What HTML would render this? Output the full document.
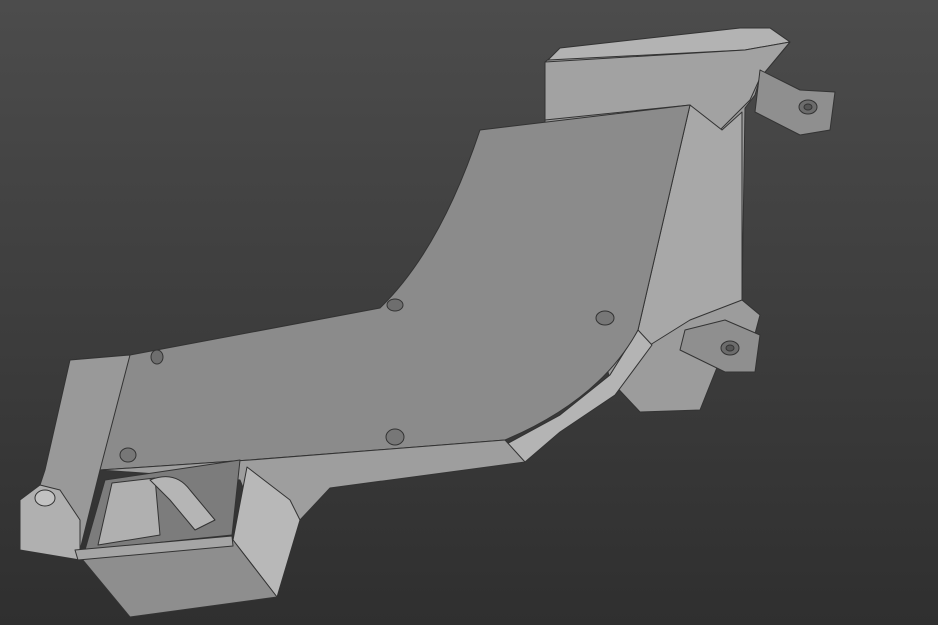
<!DOCTYPE html>
<html><head><meta charset="utf-8"><style>
html,body{margin:0;padding:0;width:938px;height:625px;overflow:hidden}
</style></head><body>
<svg width="938" height="625" viewBox="0 0 938 625" xmlns="http://www.w3.org/2000/svg">
<defs>
<linearGradient id="bg" x1="0" y1="0" x2="0" y2="1">
<stop offset="0" stop-color="#4c4c4c"/><stop offset="1" stop-color="#2f2f2f"/>
</linearGradient>
</defs>
<rect width="938" height="625" fill="url(#bg)"/>
<g stroke="#333" stroke-width="1" stroke-linejoin="round">
<polygon points="545,62 560,50 735,30 770,28 790,42 775,60 760,78 755,95 745,108 742,300 760,315 752,345 720,360 700,410 640,412 610,380 600,340 545,150" fill="#9c9c9c"/>
<polygon points="548,60 560,48 740,28 770,28 790,42 745,50" fill="#b3b3b3"/>
<polygon points="545,62 745,50 790,42 760,78 750,100 715,135 690,105 545,120" fill="#a2a2a2"/>
<polygon points="690,105 722,130 742,112 742,300 690,320 650,345 600,400 540,440 525,462 505,445 560,415 610,375 638,330" fill="#a8a8a8"/>
<polygon points="638,330 652,345 615,395 560,432 525,462 505,445 560,415 610,375" fill="#b4b4b4"/>
<polygon points="760,70 800,90 835,92 830,130 800,135 755,112" fill="#8f8f8f"/>
<ellipse cx="808" cy="107" rx="9" ry="7" fill="#6c6c6c"/>
<ellipse cx="808" cy="107" rx="4" ry="3" fill="#555"/>
<polygon points="685,330 725,320 760,335 755,372 725,372 680,350" fill="#8f8f8f"/>
<ellipse cx="730" cy="348" rx="9" ry="7" fill="#6c6c6c"/>
<ellipse cx="730" cy="348" rx="4" ry="3" fill="#555"/>
<path d="M130,355 L380,308 Q440,250 480,130 L690,105 L638,330 Q600,400 505,440 L250,460 L100,470 L70,360 Z" fill="#8b8b8b"/>
<polygon points="100,470 250,460 505,440 525,462 330,488 300,520 250,505 240,480" fill="#9e9e9e"/>
<polygon points="70,360 130,355 100,470 80,550 20,545 45,470" fill="#999"/>
<polygon points="20,500 40,485 60,490 80,520 80,560 20,550" fill="#b0b0b0"/>
<ellipse cx="45" cy="498" rx="10" ry="8" fill="#c2c2c2"/>
<polygon points="105,480 240,460 232,535 85,550" fill="#7c7c7c"/>
<polygon points="112,483 155,478 160,535 98,545" fill="#b0b0b0"/>
<path d="M150,480 Q175,470 190,490 L215,520 L195,530 L170,500 Z" fill="#b5b5b5"/>
<polygon points="247,467 290,500 300,520 277,597 233,540" fill="#b8b8b8"/>
<polygon points="77,553 233,540 277,597 130,617" fill="#8e8e8e"/>
<polygon points="75,550 232,536 233,546 78,560" fill="#a5a5a5"/>
<ellipse cx="128" cy="455" rx="8" ry="7" fill="#777"/>
<ellipse cx="395" cy="437" rx="9" ry="8" fill="#777"/>
<ellipse cx="157" cy="357" rx="6" ry="7" fill="#6e6e6e"/>
<ellipse cx="395" cy="305" rx="8" ry="6" fill="#6e6e6e"/>
<ellipse cx="605" cy="318" rx="9" ry="7" fill="#777"/>
</g>
</svg>
</body></html>
